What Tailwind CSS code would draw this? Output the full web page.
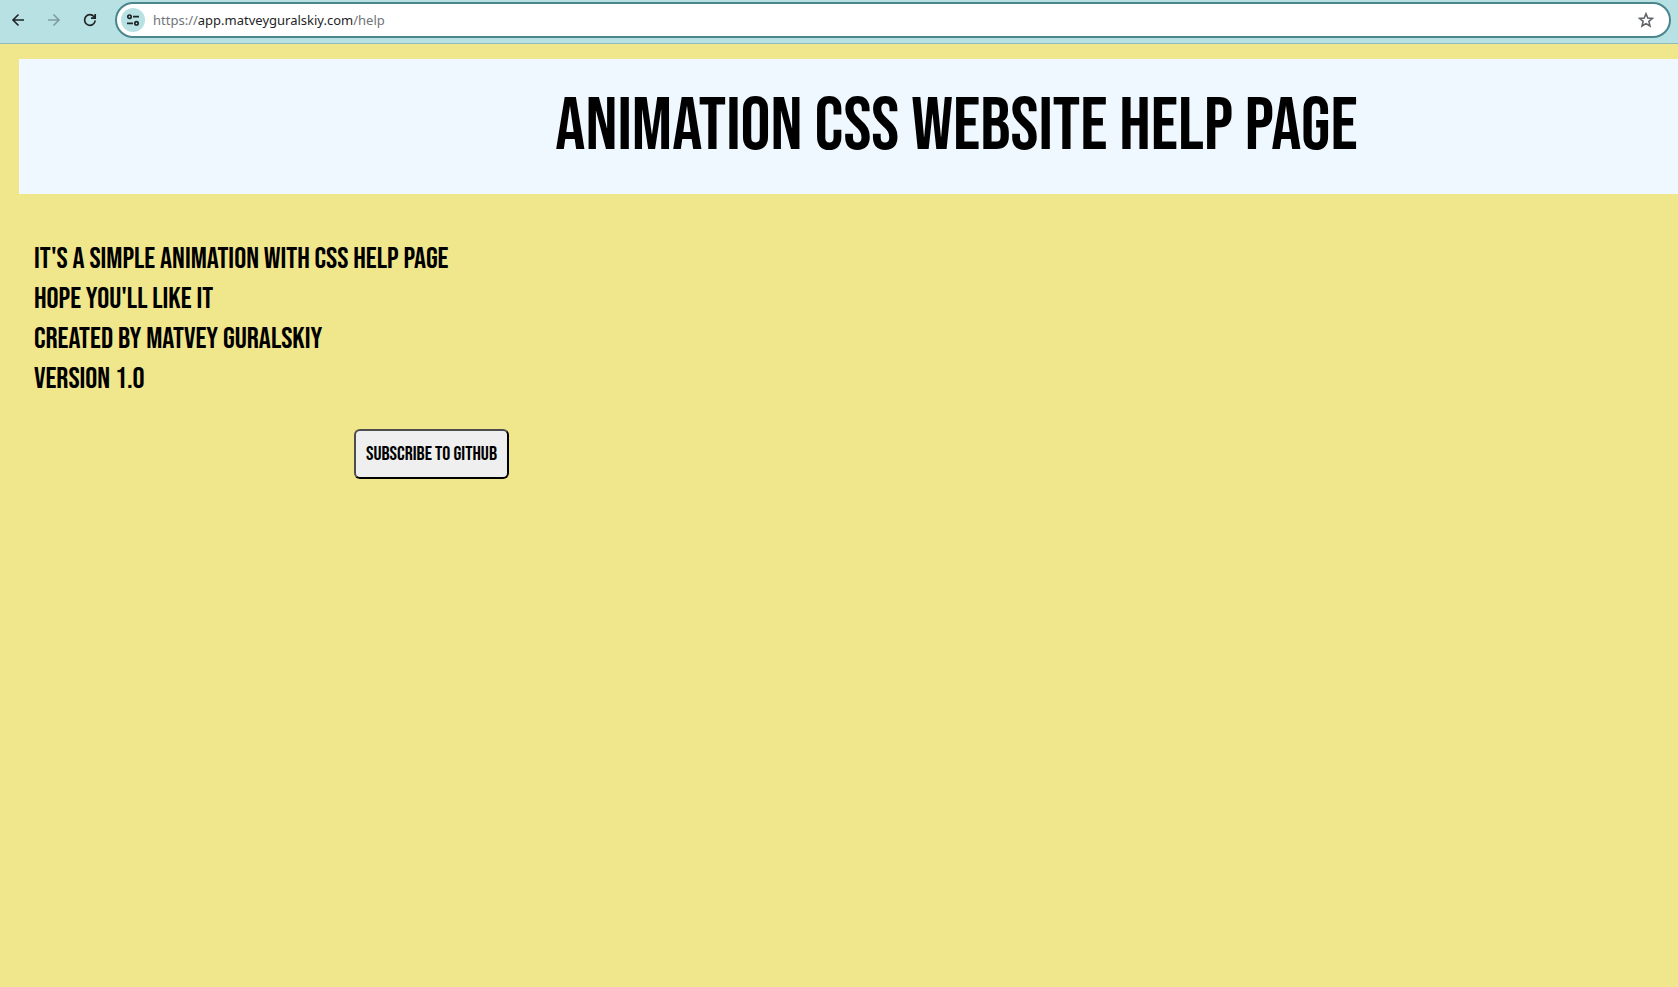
<!DOCTYPE html>
<html lang="en">
<head>
<meta charset="utf-8">
<title>Animation CSS website help page</title>
<script src="https://cdn.jsdelivr.net/npm/@tailwindcss/browser@4"></script>
</head>
<body class="flex min-h-screen flex-col overflow-x-hidden bg-[#f0e68c] text-black">
<nav class="flex h-11 items-start border-b border-[#93b9bd] bg-[#b8e1e4] pr-[7px] pt-[2px]" aria-label="Browser toolbar">
  <div class="flex h-9 w-[115px] shrink-0 items-center gap-4 pl-2">
    <button type="button" aria-label="Back" class="flex size-5 items-center justify-center text-[#1f2426]">
      <svg class="size-5" viewBox="0 0 20 20" fill="none" stroke="currentColor" stroke-width="1.600"><path d="M16 10H5M10.500 4.500 5 10l5.500 5.500"/></svg>
    </button>
    <button type="button" aria-label="Forward" class="flex size-5 items-center justify-center text-[#7f9da1]">
      <svg class="size-5" viewBox="0 0 20 20" fill="none" stroke="currentColor" stroke-width="1.600"><path d="M4 10h11M9.500 4.500 15 10l-5.500 5.500"/></svg>
    </button>
    <button type="button" aria-label="Reload" class="flex size-5 items-center justify-center text-[#1f2426]">
      <svg class="size-5" viewBox="0 0 20 20" fill="none" stroke="currentColor" stroke-width="1.700"><path d="M15.200 10.500A5.300 5.300 0 1 1 13.900 6.500L15.200 7.900M15.200 4v4.200H11"/></svg>
    </button>
  </div>
  <div class="flex h-9 grow items-center rounded-full border-2 border-[#4b868c] bg-white pl-1 pr-[13px]">
    <button type="button" aria-label="View site information" class="flex size-6 items-center justify-center rounded-full bg-[#b8e1e4] text-[#1f2426]">
      <svg class="size-4" viewBox="0 0 16 16" fill="none" stroke="currentColor" stroke-width="1.700"><circle cx="4.500" cy="4.700" r="1.700"/><path d="M8 4.700h6M2 11.300h6"/><circle cx="11.500" cy="11.300" r="1.700"/></svg>
    </button>
    <a href="https://app.matveyguralskiy.com/help" class="ml-2 grow font-['Noto_Sans',sans-serif] text-[13px] leading-5 text-[#6f7476]">https://<span class="text-[#1f2426]">app.matveyguralskiy.com</span>/help</a>
    <button type="button" aria-label="Bookmark this page" class="flex size-5 items-center justify-center text-[#5f6368]">
      <svg class="size-5" viewBox="0 0 20 20" fill="none" stroke="currentColor" stroke-width="1.600"><path d="M10 3.800l1.800 4.200 4.600.4-3.500 3 1.100 4.600-4-2.400-4 2.400 1.100-4.600-3.500-3 4.600-.4z"/></svg>
    </button>
  </div>
</nav>
<div class="flex grow flex-col pl-[19px] pt-[15px] font-['Bebas_Neue','Liberation_Sans_Narrow','Roboto_Condensed',sans-serif] uppercase">
  <header class="flex h-[135px] items-center justify-center bg-[#f0f8ff] pl-[216px]">
    <h1 class="whitespace-nowrap text-[75px] leading-none font-normal">Animation CSS website help page</h1>
  </header>
  <main class="flex w-[490px] flex-col pl-[15px] pt-[45px]">
    <div class="text-[30px] leading-10 font-normal whitespace-nowrap">
      <p>It's a simple animation with CSS help page</p>
      <p>Hope you'll like it</p>
      <p>Created by Matvey Guralskiy</p>
      <p>Version 1.0</p>
    </div>
    <button type="button" class="mt-[30px] flex h-[50px] w-[155px] items-center justify-center self-end rounded-[6px] border-2 border-t-[#4d4d4d] border-r-black border-b-black border-l-[#4d4d4d] bg-[#efefef] text-[20px] leading-6 font-normal whitespace-nowrap uppercase">Subscribe to GitHub</button>
  </main>
</div>
</body>
</html>
